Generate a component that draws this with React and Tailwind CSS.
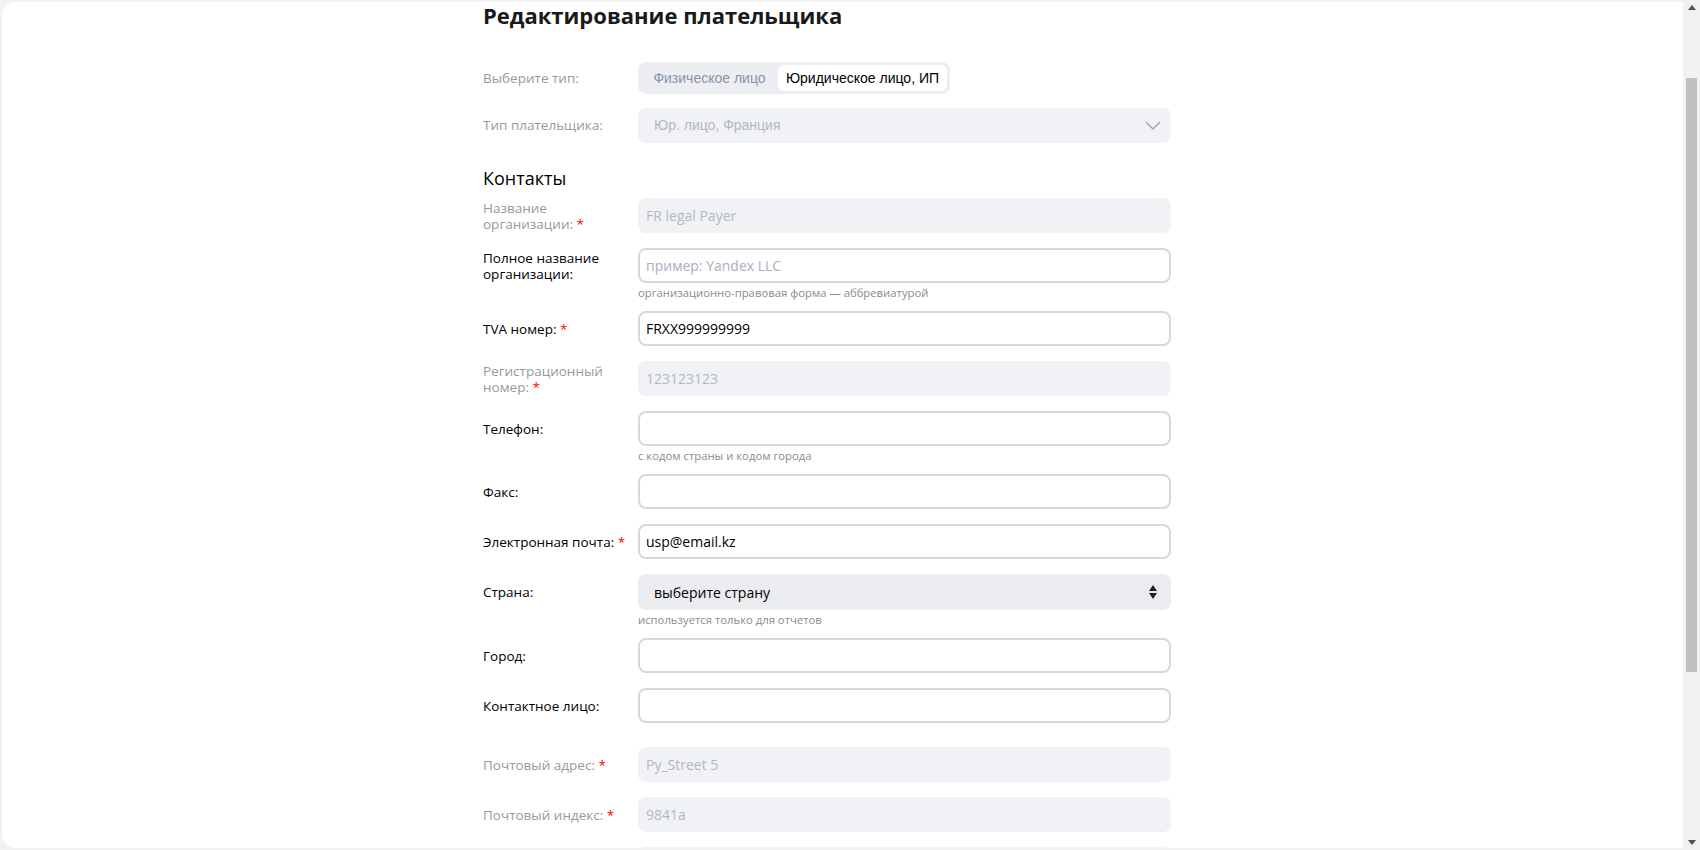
import React, { useEffect, useRef } from 'react';

const rows = [
  { label: 'Название организации:', required: true, disabled: true, value: 'FR legal Payer' },
  {
    label: 'Полное название организации:',
    placeholder: 'пример: Yandex LLC',
    hint: 'организационно-правовая форма — аббревиатурой',
  },
  { label: 'TVA номер:', required: true, value: 'FRXX999999999' },
  { label: 'Регистрационный номер:', required: true, disabled: true, value: '123123123' },
  { label: 'Телефон:', hint: 'с кодом страны и кодом города' },
  { label: 'Факс:' },
  { label: 'Электронная почта:', required: true, value: 'usp@email.kz' },
  { label: 'Страна:', select: true, hint: 'используется только для отчетов' },
  { label: 'Город:' },
  { label: 'Контактное лицо:', last: true },
];

const addressRows = [
  { label: 'Почтовый адрес:', required: true, disabled: true, value: 'Py_Street 5' },
  { label: 'Почтовый индекс:', required: true, disabled: true, value: '9841a' },
  { label: 'Юридический адрес:', required: true, disabled: true, value: 'Py_Street 5' },
];

const Field = ({ label, required, disabled, value, placeholder, hint, select, last }) => {
  let spacing = 'mb-[15px]';
  if (hint) spacing = 'mb-[12px]';
  if (last) spacing = 'mb-[24px]';

  return (
    <div className={spacing}>
      <div className="flex items-center">
        <label
          className={`mr-[5px] w-[150px] shrink-0 text-[13.5px] leading-[16px] ${
            disabled ? 'text-[#999999]' : 'text-black'
          }`}
        >
          {label}
          {/* звездочка не должна уходить на отдельную строку */}
          {required && <span className="text-[#ff0000]">{'\u00a0*'}</span>}
        </label>

        {select ? (
          <div className="flex h-[36px] w-[533px] items-center justify-between rounded-[8px] bg-[#ebecf0] pl-[16px] pr-[14px] text-[14px] text-black">
            <span>выберите страну</span>
            <svg width="8" height="14" viewBox="0 0 8 14">
              <path d="M4 0 L8 6 L0 6 Z" fill="#1f1f1f" />
              <path d="M0 8 L8 8 L4 14 Z" fill="#1f1f1f" />
            </svg>
          </div>
        ) : disabled ? (
          <input
            readOnly
            value={value}
            className="h-[35px] w-[533px] rounded-[8px] bg-[#f1f2f5] px-[8px] text-[14px] text-[#b3b8c6] outline-none"
          />
        ) : (
          <input
            readOnly
            value={value || ''}
            placeholder={placeholder}
            className="h-[35px] w-[533px] rounded-[8px] border-2 border-[#d5d8e0] bg-white px-[6px] text-[14px] text-black outline-none placeholder:text-[#a9afbe]"
          />
        )}
      </div>
      {hint && (
        <p className="ml-[155px] mt-[3px] text-[11.3px] leading-[13px] text-[#8c8c8c]">{hint}</p>
      )}
    </div>
  );
};

// полоса прокрутки окна (в headless не рисуется сама)
const Scrollbar = () => (
  <div className="flex h-full w-[17px] shrink-0 flex-col items-center bg-[#f1f1f1]">
    <div className="flex h-[15px] w-full items-center justify-center">
      <svg width="8" height="5" viewBox="0 0 8 5">
        <path d="M4 0 L8 5 L0 5 Z" fill="#505050" />
      </svg>
    </div>
    <div className="mt-[63px] h-[594px] w-[11px] bg-[#c1c1c1]" />
    <div className="flex-1" />
    <div className="flex h-[15px] w-full items-center justify-center">
      <svg width="8" height="5" viewBox="0 0 8 5">
        <path d="M0 0 L8 0 L4 5 Z" fill="#505050" />
      </svg>
    </div>
  </div>
);

export default function App() {
  const scrollRef = useRef(null);

  useEffect(() => {
    if (scrollRef.current) scrollRef.current.scrollTop = 72;
  }, []);

  return (
    <div className="flex h-[850px] bg-[#f2f2f2] font-['Open_Sans',sans-serif]">
      <div className="h-full flex-1 py-[2px] pl-[2px]">
        <div ref={scrollRef} className="h-full overflow-y-scroll rounded-l-[14px] bg-white">
          <div className="pl-[481px] pt-[70px] pb-[60px]">
            <h1 className="text-[22px] font-bold leading-[30px] text-[#1a1a1a]">
              Редактирование плательщика
            </h1>

            {/* Тип плательщика */}
            <div className="mt-[32px] flex items-center">
              <span className="mr-[5px] w-[150px] text-[13.5px] text-[#999999]">Выберите тип:</span>
              <div className="flex h-[32px] w-[312px] rounded-[8px] bg-[#eceef2] p-[3px] font-['Liberation_Sans',sans-serif] text-[14px]">
                <button className="flex w-[137px] items-center justify-center text-[#8a93a8]">
                  Физическое лицо
                </button>
                <button className="flex w-[169px] items-center justify-center rounded-[6px] bg-white text-black">
                  Юридическое лицо, ИП
                </button>
              </div>
            </div>

            <div className="mt-[14px] flex items-center">
              <span className="mr-[5px] w-[150px] text-[13.5px] text-[#999999]">Тип плательщика:</span>
              <div className="flex h-[35px] w-[533px] items-center justify-between rounded-[8px] bg-[#f1f2f5] pl-[16px] pr-[10px]">
                <span className="font-['Liberation_Sans',sans-serif] text-[14px] text-[#b3b8c6]">
                  Юр. лицо, Франция
                </span>
                <svg width="16" height="9" viewBox="0 0 16 9" fill="none">
                  <path d="M1 1 L8 8 L15 1" stroke="#a3a9b8" strokeWidth="1.5" />
                </svg>
              </div>
            </div>

            <h2 className="mt-[23px] mb-[8px] text-[18px] leading-[24px] text-black">Контакты</h2>

            {rows.map((row) => (
              <Field key={row.label} {...row} />
            ))}

            {addressRows.map((row) => (
              <Field key={row.label} {...row} />
            ))}

            <div className="mt-[20px] flex gap-[10px] pl-[155px]">
              <button className="h-[36px] rounded-[8px] bg-[#ffdb4d] px-[20px] text-[14px] text-black">
                Сохранить
              </button>
              <button className="h-[36px] rounded-[8px] bg-[#eceef2] px-[20px] text-[14px] text-black">
                Отмена
              </button>
            </div>
          </div>
        </div>
      </div>
      <Scrollbar />
    </div>
  );
}
